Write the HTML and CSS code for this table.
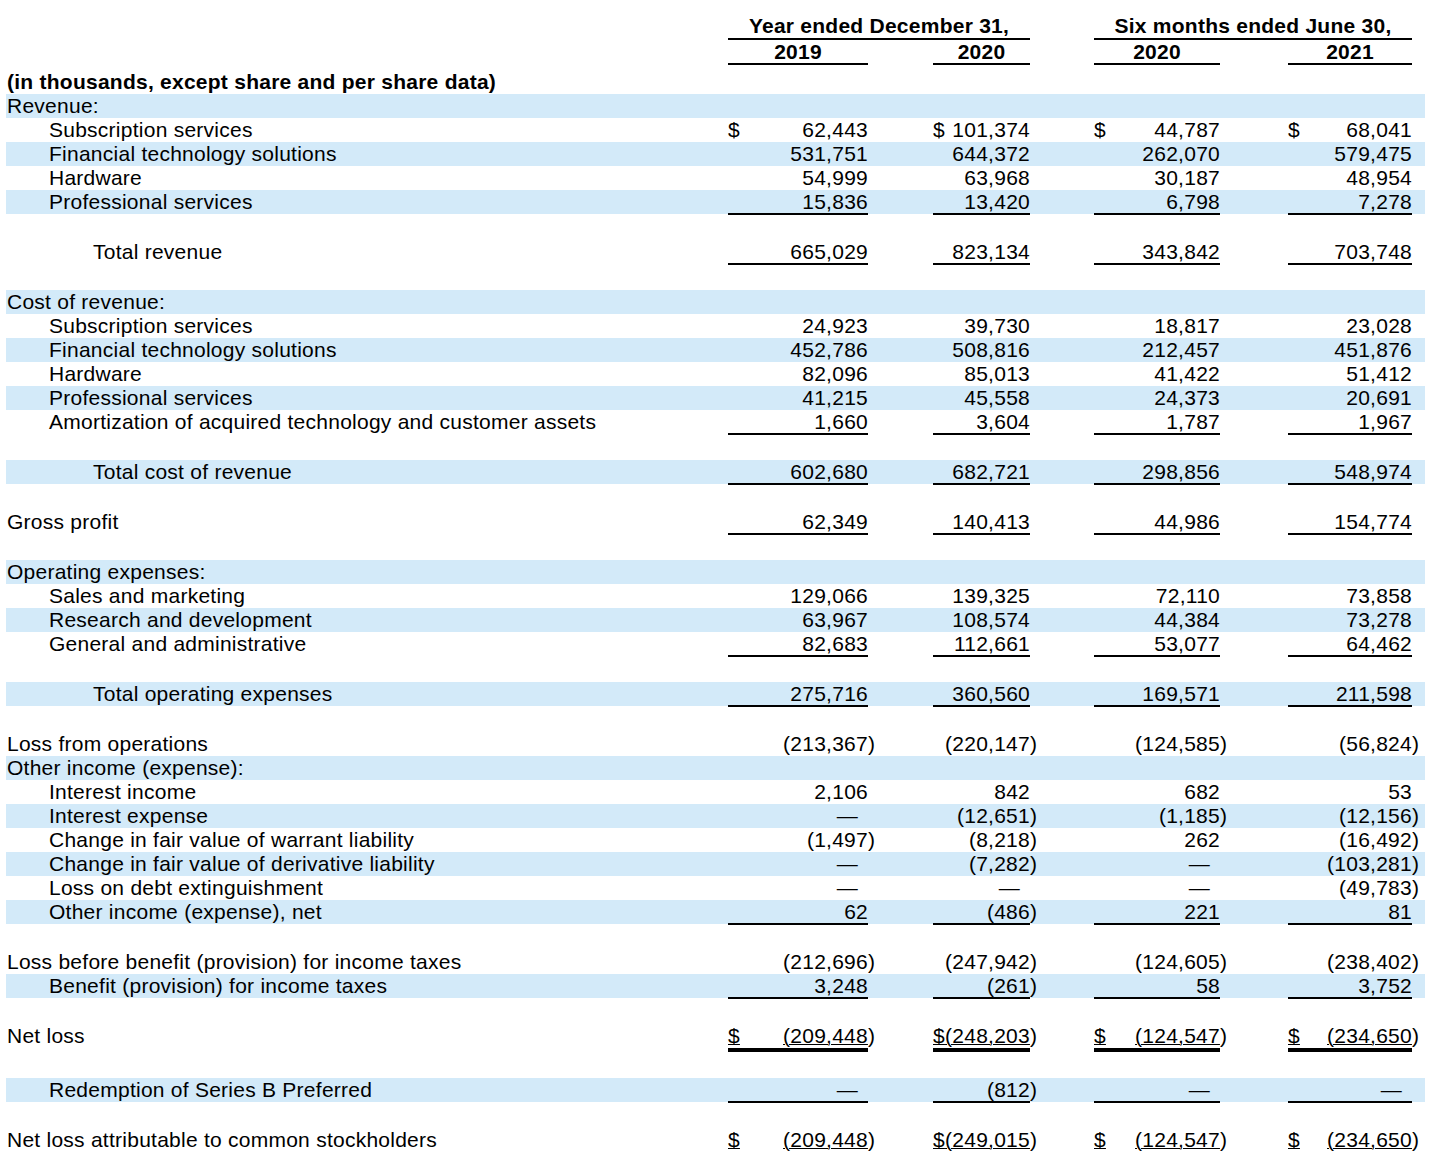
FILE: index.html
```html
<!DOCTYPE html>
<html lang="en">
<head>
<meta charset="utf-8">
<title>Statements of Operations</title>
<link rel="stylesheet" href="styles.css">
</head>
<body>
<div class="stmt">
  <div class="row h1">
    <div class="hd ab">Year ended December 31,</div>
    <div class="hd cd">Six months ended June 30,</div>
  </div>
  <div class="row h2">
    <div class="hd a">2019</div>
    <div class="hd b">2020</div>
    <div class="hd c">2020</div>
    <div class="hd d">2021</div>
  </div>

  <div class="row cap"><div class="lbl bold">(in thousands, except share and per share data)</div></div>
  <div class="row s"><div class="lbl">Revenue:</div></div>
  <div class="row">
    <div class="lbl in">Subscription services</div>
    <div class="v a dl"><span>$</span><span>62,443</span></div>
    <div class="v b dl"><span>$</span><span>101,374</span></div>
    <div class="v c dl"><span>$</span><span>44,787</span></div>
    <div class="v d dl"><span>$</span><span>68,041</span></div>
  </div>
  <div class="row s">
    <div class="lbl in">Financial technology solutions</div>
    <div class="v a">531,751</div><div class="v b">644,372</div><div class="v c">262,070</div><div class="v d">579,475</div>
  </div>
  <div class="row">
    <div class="lbl in">Hardware</div>
    <div class="v a">54,999</div><div class="v b">63,968</div><div class="v c">30,187</div><div class="v d">48,954</div>
  </div>
  <div class="row s u">
    <div class="lbl in">Professional services</div>
    <div class="v a">15,836</div><div class="v b">13,420</div><div class="v c">6,798</div><div class="v d">7,278</div>
  </div>
  <div class="row u gap">
    <div class="lbl in2">Total revenue</div>
    <div class="v a">665,029</div><div class="v b">823,134</div><div class="v c">343,842</div><div class="v d">703,748</div>
  </div>

  <div class="row s gap"><div class="lbl">Cost of revenue:</div></div>
  <div class="row">
    <div class="lbl in">Subscription services</div>
    <div class="v a">24,923</div><div class="v b">39,730</div><div class="v c">18,817</div><div class="v d">23,028</div>
  </div>
  <div class="row s">
    <div class="lbl in">Financial technology solutions</div>
    <div class="v a">452,786</div><div class="v b">508,816</div><div class="v c">212,457</div><div class="v d">451,876</div>
  </div>
  <div class="row">
    <div class="lbl in">Hardware</div>
    <div class="v a">82,096</div><div class="v b">85,013</div><div class="v c">41,422</div><div class="v d">51,412</div>
  </div>
  <div class="row s">
    <div class="lbl in">Professional services</div>
    <div class="v a">41,215</div><div class="v b">45,558</div><div class="v c">24,373</div><div class="v d">20,691</div>
  </div>
  <div class="row u">
    <div class="lbl in">Amortization of acquired technology and customer assets</div>
    <div class="v a">1,660</div><div class="v b">3,604</div><div class="v c">1,787</div><div class="v d">1,967</div>
  </div>
  <div class="row s u gap">
    <div class="lbl in2">Total cost of revenue</div>
    <div class="v a">602,680</div><div class="v b">682,721</div><div class="v c">298,856</div><div class="v d">548,974</div>
  </div>
  <div class="row u gap">
    <div class="lbl">Gross profit</div>
    <div class="v a">62,349</div><div class="v b">140,413</div><div class="v c">44,986</div><div class="v d">154,774</div>
  </div>

  <div class="row s gap"><div class="lbl">Operating expenses:</div></div>
  <div class="row">
    <div class="lbl in">Sales and marketing</div>
    <div class="v a">129,066</div><div class="v b">139,325</div><div class="v c">72,110</div><div class="v d">73,858</div>
  </div>
  <div class="row s">
    <div class="lbl in">Research and development</div>
    <div class="v a">63,967</div><div class="v b">108,574</div><div class="v c">44,384</div><div class="v d">73,278</div>
  </div>
  <div class="row u">
    <div class="lbl in">General and administrative</div>
    <div class="v a">82,683</div><div class="v b">112,661</div><div class="v c">53,077</div><div class="v d">64,462</div>
  </div>
  <div class="row s u gap">
    <div class="lbl in2">Total operating expenses</div>
    <div class="v a">275,716</div><div class="v b">360,560</div><div class="v c">169,571</div><div class="v d">211,598</div>
  </div>

  <div class="row gap">
    <div class="lbl">Loss from operations</div>
    <div class="v a"><span>(213,367<span class="p">)</span></span></div>
    <div class="v b"><span>(220,147<span class="p">)</span></span></div>
    <div class="v c"><span>(124,585<span class="p">)</span></span></div>
    <div class="v d"><span>(56,824<span class="p">)</span></span></div>
  </div>
  <div class="row s"><div class="lbl">Other income (expense):</div></div>
  <div class="row">
    <div class="lbl in">Interest income</div>
    <div class="v a">2,106</div><div class="v b">842</div><div class="v c">682</div><div class="v d">53</div>
  </div>
  <div class="row s">
    <div class="lbl in">Interest expense</div>
    <div class="v a"><span class="dash">—</span></div>
    <div class="v b"><span>(12,651<span class="p">)</span></span></div>
    <div class="v c"><span>(1,185<span class="p">)</span></span></div>
    <div class="v d"><span>(12,156<span class="p">)</span></span></div>
  </div>
  <div class="row">
    <div class="lbl in">Change in fair value of warrant liability</div>
    <div class="v a"><span>(1,497<span class="p">)</span></span></div>
    <div class="v b"><span>(8,218<span class="p">)</span></span></div>
    <div class="v c">262</div>
    <div class="v d"><span>(16,492<span class="p">)</span></span></div>
  </div>
  <div class="row s">
    <div class="lbl in">Change in fair value of derivative liability</div>
    <div class="v a"><span class="dash">—</span></div>
    <div class="v b"><span>(7,282<span class="p">)</span></span></div>
    <div class="v c"><span class="dash">—</span></div>
    <div class="v d"><span>(103,281<span class="p">)</span></span></div>
  </div>
  <div class="row">
    <div class="lbl in">Loss on debt extinguishment</div>
    <div class="v a"><span class="dash">—</span></div>
    <div class="v b"><span class="dash">—</span></div>
    <div class="v c"><span class="dash">—</span></div>
    <div class="v d"><span>(49,783<span class="p">)</span></span></div>
  </div>
  <div class="row s u">
    <div class="lbl in">Other income (expense), net</div>
    <div class="v a">62</div>
    <div class="v b"><span>(486<span class="p">)</span></span></div>
    <div class="v c">221</div>
    <div class="v d">81</div>
  </div>

  <div class="row gap">
    <div class="lbl">Loss before benefit (provision) for income taxes</div>
    <div class="v a"><span>(212,696<span class="p">)</span></span></div>
    <div class="v b"><span>(247,942<span class="p">)</span></span></div>
    <div class="v c"><span>(124,605<span class="p">)</span></span></div>
    <div class="v d"><span>(238,402<span class="p">)</span></span></div>
  </div>
  <div class="row s u">
    <div class="lbl in">Benefit (provision) for income taxes</div>
    <div class="v a">3,248</div>
    <div class="v b"><span>(261<span class="p">)</span></span></div>
    <div class="v c">58</div>
    <div class="v d">3,752</div>
  </div>

  <div class="row uu gap">
    <div class="lbl">Net loss</div>
    <div class="v a dl"><span class="ul">$</span><span><span class="ul">(209,448</span><span class="p">)</span></span></div>
    <div class="v b dl"><span class="ul">$</span><span><span class="ul">(248,203</span><span class="p">)</span></span></div>
    <div class="v c dl"><span class="ul">$</span><span><span class="ul">(124,547</span><span class="p">)</span></span></div>
    <div class="v d dl"><span class="ul">$</span><span><span class="ul">(234,650</span><span class="p">)</span></span></div>
  </div>

  <div class="row s u gap30">
    <div class="lbl in">Redemption of Series B Preferred</div>
    <div class="v a"><span class="dash">—</span></div>
    <div class="v b"><span>(812<span class="p">)</span></span></div>
    <div class="v c"><span class="dash">—</span></div>
    <div class="v d"><span class="dash">—</span></div>
  </div>

  <div class="row uu gap">
    <div class="lbl">Net loss attributable to common stockholders</div>
    <div class="v a dl"><span class="ul">$</span><span><span class="ul">(209,448</span><span class="p">)</span></span></div>
    <div class="v b dl"><span class="ul">$</span><span><span class="ul">(249,015</span><span class="p">)</span></span></div>
    <div class="v c dl"><span class="ul">$</span><span><span class="ul">(124,547</span><span class="p">)</span></span></div>
    <div class="v d dl"><span class="ul">$</span><span><span class="ul">(234,650</span><span class="p">)</span></span></div>
  </div>
</div>
</body>
</html>
```

FILE: styles.css
```css
html, body {
  background: #ffffff;
}

body {
  margin: 0;
  padding: 14px 0 0 6px;
  font-family: "Liberation Sans", Arial, Helvetica, sans-serif;
  font-size: 21px;
  letter-spacing: 0.25px;
  color: #000000;
}

.stmt {
  width: 1419px;
}

.row {
  display: grid;
  grid-template-columns: 722px 140px 65px 97px 64px 126px 68px 124px 13px;
  height: 24px;
  line-height: 24px;
}

.row.s {
  background: #d3eaf9;
}

.row.h1 {
  height: 26px;
}

.row.h2 {
  height: 25px;
}

.row.cap {
  margin-top: 5px;
}

.gap {
  margin-top: 26px;
}

.gap30 {
  margin-top: 30px;
}

.lbl {
  grid-column: 1;
  white-space: nowrap;
  padding-left: 1px;
}

.lbl.in {
  padding-left: 43px;
}

.lbl.in2 {
  padding-left: 87px;
}

.bold {
  font-weight: bold;
}

.hd {
  font-weight: bold;
  text-align: center;
  white-space: nowrap;
  box-shadow: inset 0 -2px 0 #000000;
}

.ab {
  grid-column: 2 / 5;
}

.cd {
  grid-column: 6 / 9;
}

.a { grid-column: 2; }
.b { grid-column: 4; }
.c { grid-column: 6; }
.d { grid-column: 8; }

.v {
  display: flex;
  justify-content: flex-end;
  white-space: nowrap;
}

.v.dl {
  justify-content: space-between;
}

.p {
  margin-right: -7.2px;
}

.dash {
  padding-right: 10px;
}

.u .v {
  box-shadow: 0 1px 0 #000000, inset 0 -1px 0 #000000;
}

.uu .v {
  box-shadow: 0 4px 0 #000000;
}

.ul {
  text-decoration: underline;
  text-decoration-thickness: 1px;
}
```
